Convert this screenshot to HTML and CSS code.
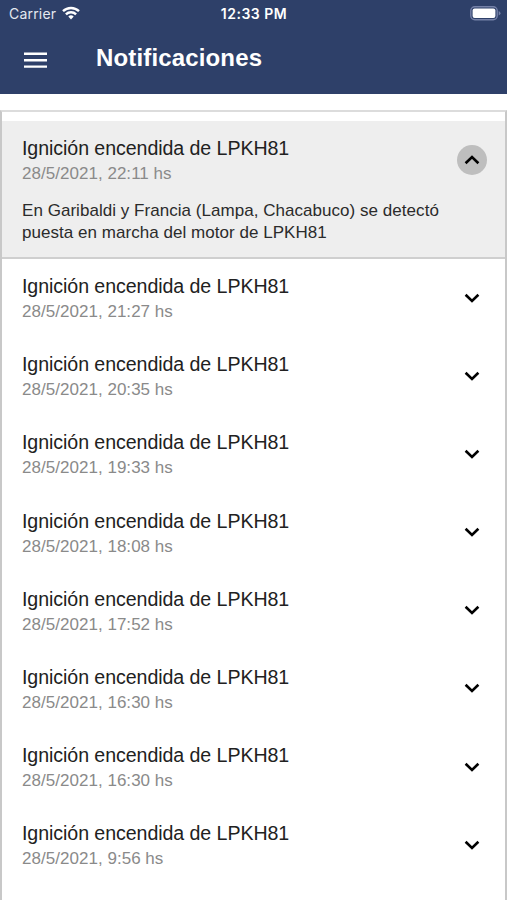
FILE: index.html
```
<!DOCTYPE html>
<html lang="es">
<head>
	<meta charset="utf-8">
	<title>Notificaciones</title>
	<link rel="stylesheet" href="styles.css">
</head>
<body>
<div id="header">
	<div class="status">
		<div class="carrier">
			<span>Carrier</span>
			<svg width="18" height="14" viewBox="0 0 18 14" fill="none" stroke="#fff" stroke-width="2.4">
				<path d="M1 5.2a11.6 11.6 0 0 1 16 0"/>
				<path d="M3.9 8.4a7.3 7.3 0 0 1 10.2 0"/>
				<path d="M6.3 10.6a3.9 3.9 0 0 1 5.4 0L9 13.6z" fill="#fff" stroke="none"/>
			</svg>
		</div>
		<div class="time">12:33 PM</div>
		<div class="battery">
			<svg width="31" height="15" viewBox="0 0 31 15">
				<rect x=".8" y=".8" width="26.4" height="13" rx="4" fill="none" stroke="#7581a8" stroke-width="1.4"/>
				<rect x="2.6" y="2.6" width="22.8" height="9.4" rx="2" fill="#fff"/>
				<path d="M28.7 5v4.6q1.8-.8 1.8-2.3T28.7 5z" fill="#7581a8"/>
			</svg>
		</div>
	</div>
	<div class="bar">
		<svg class="menu" width="23" height="17" viewBox="0 0 23 17" fill="#fff">
			<path d="M0 .5h23v2.4H0zM0 7h23v2.4H0zM0 13.4h23v2.4H0z"/>
		</svg>
		<h1>Notificaciones</h1>
	</div>
</div>
<div id="list">
	<ul>
		<li class="show">
			<div class="row">
				<div class="info">
					<p class="title">Ignición encendida de LPKH81</p>
					<p class="date">28/5/2021, 22:11 hs</p>
				</div>
				<span class="arrow"><svg width="16" height="10" viewBox="0 0 16 10"><path d="M1.6 8.2 8 2l6.4 6.2"/></svg></span>
			</div>
			<p class="detail">En Garibaldi y Francia (Lampa, Chacabuco) se detectó<br>puesta en marcha del motor de LPKH81</p>
		</li>
		<li>
			<div class="row">
				<div class="info">
					<p class="title">Ignición encendida de LPKH81</p>
					<p class="date">28/5/2021, 21:27 hs</p>
				</div>
				<span class="arrow"><svg width="16" height="10" viewBox="0 0 16 10"><path d="M1.6 1.8 8 8l6.4-6.2"/></svg></span>
			</div>
		</li>
		<li>
			<div class="row">
				<div class="info">
					<p class="title">Ignición encendida de LPKH81</p>
					<p class="date">28/5/2021, 20:35 hs</p>
				</div>
				<span class="arrow"><svg width="16" height="10" viewBox="0 0 16 10"><path d="M1.6 1.8 8 8l6.4-6.2"/></svg></span>
			</div>
		</li>
		<li>
			<div class="row">
				<div class="info">
					<p class="title">Ignición encendida de LPKH81</p>
					<p class="date">28/5/2021, 19:33 hs</p>
				</div>
				<span class="arrow"><svg width="16" height="10" viewBox="0 0 16 10"><path d="M1.6 1.8 8 8l6.4-6.2"/></svg></span>
			</div>
		</li>
		<li>
			<div class="row">
				<div class="info">
					<p class="title">Ignición encendida de LPKH81</p>
					<p class="date">28/5/2021, 18:08 hs</p>
				</div>
				<span class="arrow"><svg width="16" height="10" viewBox="0 0 16 10"><path d="M1.6 1.8 8 8l6.4-6.2"/></svg></span>
			</div>
		</li>
		<li>
			<div class="row">
				<div class="info">
					<p class="title">Ignición encendida de LPKH81</p>
					<p class="date">28/5/2021, 17:52 hs</p>
				</div>
				<span class="arrow"><svg width="16" height="10" viewBox="0 0 16 10"><path d="M1.6 1.8 8 8l6.4-6.2"/></svg></span>
			</div>
		</li>
		<li>
			<div class="row">
				<div class="info">
					<p class="title">Ignición encendida de LPKH81</p>
					<p class="date">28/5/2021, 16:30 hs</p>
				</div>
				<span class="arrow"><svg width="16" height="10" viewBox="0 0 16 10"><path d="M1.6 1.8 8 8l6.4-6.2"/></svg></span>
			</div>
		</li>
		<li>
			<div class="row">
				<div class="info">
					<p class="title">Ignición encendida de LPKH81</p>
					<p class="date">28/5/2021, 16:30 hs</p>
				</div>
				<span class="arrow"><svg width="16" height="10" viewBox="0 0 16 10"><path d="M1.6 1.8 8 8l6.4-6.2"/></svg></span>
			</div>
		</li>
		<li>
			<div class="row">
				<div class="info">
					<p class="title">Ignición encendida de LPKH81</p>
					<p class="date">28/5/2021, 9:56 hs</p>
				</div>
				<span class="arrow"><svg width="16" height="10" viewBox="0 0 16 10"><path d="M1.6 1.8 8 8l6.4-6.2"/></svg></span>
			</div>
		</li>
	</ul>
</div>
</body>
</html>
```
FILE: styles.css
```
body,ul,li,p,h1{
	margin:0;
	padding:0;
}
*{
	box-sizing: border-box;
}
li{
	list-style: none;
}
svg{
	display: block;
}
body{
	height:900px;
	display: flex;
	flex-direction: column;
	overflow: hidden;
	background: #ffffff;
	font-family: "Liberation Sans", Arial, sans-serif;
}
#header{
	height:94px;
	flex-shrink: 0;
	background: #2e4069;
	color:#ffffff;
}
.status{
	height:28px;
	padding:0 6px 0 9px;
	display: grid;
	grid-template-columns: 1fr auto 1fr;
	align-items: center;
	font-family: Inter, sans-serif;
	font-size:14px;
	line-height: 28px;
}
.carrier{
	display: flex;
	align-items: center;
	gap:6px;
	color:#e4e8f0;
	letter-spacing: 0.2px;
}
.carrier svg{
	margin-top: -3px;
}
.time{
	margin-right: 2px;
	font-weight: 600;
	letter-spacing: 0.5px;
}
.battery{
	justify-self: end;
	margin-top: -2px;
}
.bar{
	height:60px;
	padding-left: 24px;
	display: flex;
	align-items: center;
	gap:49px;
}
.menu{
	margin-top: 4px;
}
.bar h1{
	font-size:24px;
	line-height: 30px;
	font-weight: bold;
	letter-spacing: 0.15px;
}
#list{
	flex:1;
	margin-top: 16px;
	padding-top: 9px;
	border:2px solid #c8c8c8;
	border-top-color: #dcdcdc;
	border-bottom: 0;
	overflow: hidden;
}
#list li{
	height:78.2px;
	padding:13px 18.5px 0 20px;
}
#list li.show{
	height:138px;
	background: #eeeeee;
	border-bottom: 2px solid #cfcfcf;
}
.row{
	display: flex;
	justify-content: space-between;
	align-items: center;
}
.title{
	font-size:19.6px;
	line-height: 28px;
	letter-spacing: -0.07px;
	color:#212121;
}
.date{
	font-size:17px;
	line-height: 23px;
	letter-spacing: 0.03px;
	color:#8a8a8a;
}
.arrow{
	width:30px;
	height:30px;
	border-radius: 50%;
	display: flex;
	align-items: center;
	justify-content: center;
}
.arrow path{
	fill:none;
	stroke:#000000;
	stroke-width: 2.6;
}
.show .arrow{
	background: #bebebe;
}
.detail{
	margin-top: 15px;
	font-size:17px;
	line-height: 22px;
	letter-spacing: 0.04px;
	color:#2b2b2b;
	white-space: nowrap;
}
```
